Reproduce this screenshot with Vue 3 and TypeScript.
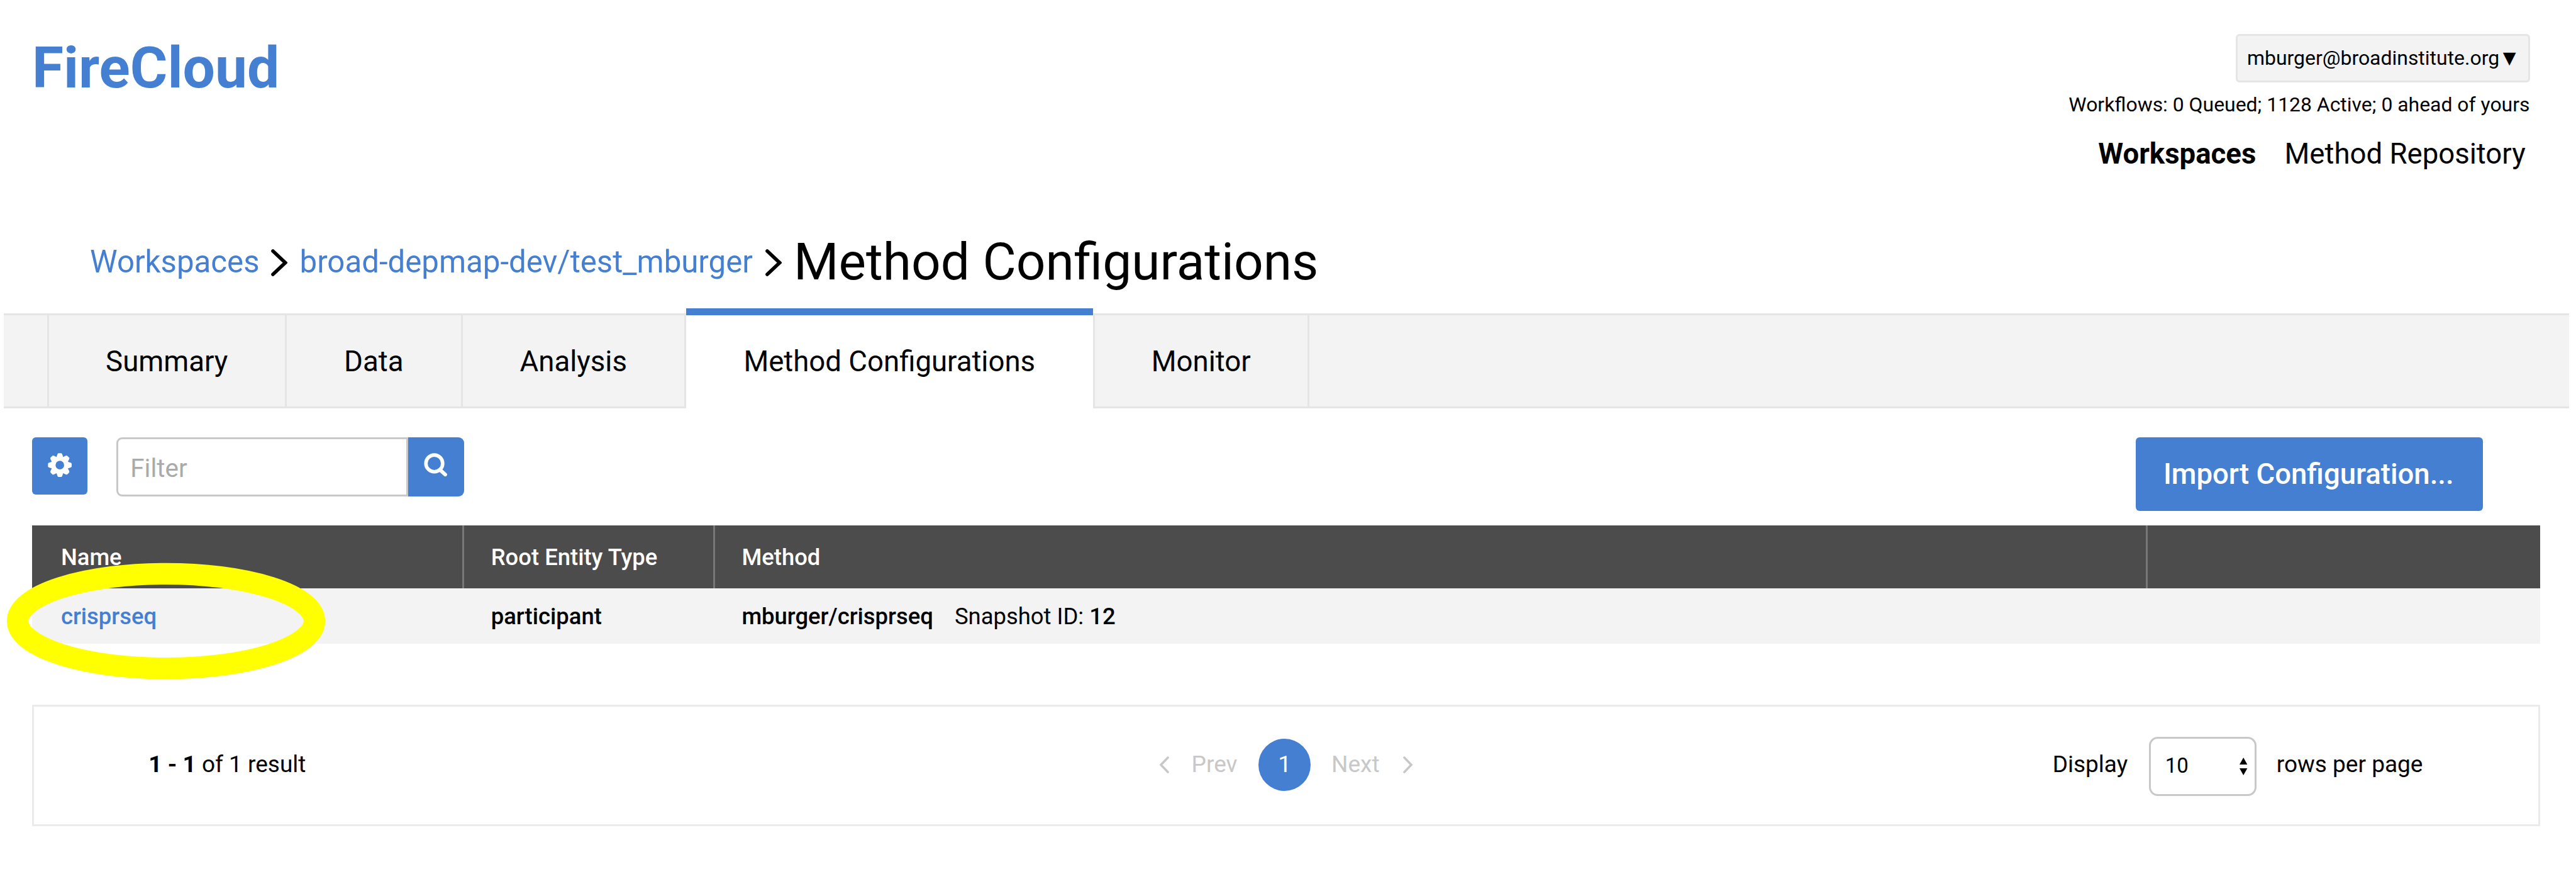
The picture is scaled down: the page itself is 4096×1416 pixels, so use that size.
<script setup lang="ts">
import { ref } from 'vue'

interface Tab {
  label: string
  width: number
}

interface MethodConfig {
  name: string
  rootEntityType: string
  method: string
  snapshotId: number
}

const user = 'mburger@broadinstitute.org'
const activeTab = ref('Method Configurations')
const filter = ref('')

const tabs: Tab[] = [
  { label: 'Summary', width: 381.5 },
  { label: 'Data', width: 279.5 },
  { label: 'Analysis', width: 355.5 },
  { label: 'Method Configurations', width: 646.5 },
  { label: 'Monitor', width: 344.5 },
]

const columns = ['Name', 'Root Entity Type', 'Method', '']

const configs: MethodConfig[] = [
  { name: 'crisprseq', rootEntityType: 'participant', method: 'mburger/crisprseq', snapshotId: 12 },
]

const teeth = [0, 45, 90, 135, 180, 225, 270, 315]
</script>

<template>
  <div class="page">
    <header class="header">
      <div class="logo">FireCloud</div>
      <div class="account">
        <div class="user-menu">
          <span>{{ user }}</span>
          <span class="caret">▼</span>
        </div>
        <div class="queue">Workflows: 0 Queued; 1128 Active; 0 ahead of yours</div>
        <nav class="main-nav">
          <a class="current">Workspaces</a>
          <a>Method Repository</a>
        </nav>
      </div>
    </header>

    <div class="breadcrumbs">
      <a class="crumb">Workspaces</a>
      <svg class="sep sep-first" viewBox="0 0 26 43"><path d="M3 3 L22.6 21.5 L3 40" /></svg>
      <a class="crumb">broad-depmap-dev/test_mburger</a>
      <svg class="sep sep-last" viewBox="0 0 26 43"><path d="M3 3 L22.6 21.5 L3 40" /></svg>
      <h1 class="title">Method Configurations</h1>
    </div>

    <nav class="tabs">
      <a
        v-for="tab in tabs"
        :key="tab.label"
        class="tab"
        :class="{ active: tab.label === activeTab }"
        :style="{ width: tab.width + 'px' }"
      ><span>{{ tab.label }}</span></a>
    </nav>

    <main class="content">
      <div class="toolbar">
        <button class="gear-button">
          <svg class="icon" viewBox="-28 -28 56 56">
            <circle r="15.2" fill="none" stroke="#fff" stroke-width="10.4" />
            <path
              v-for="angle in teeth"
              :key="angle"
              :transform="`rotate(${angle})`"
              fill="#fff"
              d="M-8 -18 L-5.6 -25 Q-4.8 -27.3 -3 -27.5 L3 -27.5 Q4.8 -27.3 5.6 -25 L8 -18 Z"
            />
          </svg>
        </button>
        <div class="filter">
          <input v-model="filter" class="filter-input" placeholder="Filter" />
          <button class="search-button">
            <svg class="icon" viewBox="0 0 56 56">
              <circle cx="24.2" cy="24" r="19.5" fill="none" stroke="#fff" stroke-width="8.2" />
              <path d="M38 39.5 L49.6 50" stroke="#fff" stroke-width="8.6" stroke-linecap="round" />
            </svg>
          </button>
        </div>
        <button class="import-button">Import Configuration...</button>
      </div>

      <div class="table">
        <div class="row head">
          <div v-for="(column, i) in columns" :key="i" class="cell">{{ column }}</div>
        </div>
        <div v-for="config in configs" :key="config.name" class="row body">
          <div class="cell"><a class="link">{{ config.name }}</a></div>
          <div class="cell">{{ config.rootEntityType }}</div>
          <div class="cell">
            <span>{{ config.method }}</span>
            <span class="snapshot">Snapshot ID: <b>{{ config.snapshotId }}</b></span>
          </div>
          <div class="cell"></div>
        </div>
        <svg class="highlight" viewBox="0 0 510 190">
          <ellipse cx="255" cy="95" rx="236" ry="75.2" />
        </svg>
      </div>

      <div class="pager">
        <div class="count"><b>1 - 1</b> of 1 result</div>
        <div class="pages">
          <svg class="arrow" viewBox="0 0 16 27"><path d="M14 2 L3 13.5 L14 25" /></svg>
          <span class="prev">Prev</span>
          <span class="page-number">1</span>
          <span class="next">Next</span>
          <svg class="arrow" viewBox="0 0 16 27"><path d="M2 2 L13 13.5 L2 25" /></svg>
        </div>
        <div class="page-size">
          <span>Display</span>
          <div class="select">
            <span>10</span>
            <svg class="updown" viewBox="0 0 12.4 28"><path d="M6.2 0 L12.4 11 H0 Z M0 17 H12.4 L6.2 28 Z" /></svg>
          </div>
          <span>rows per page</span>
        </div>
      </div>
    </main>
  </div>
</template>

<style>
body {
  margin: 0;
  background: #fff;
}
</style>

<style scoped>
.page {
  width: 4096px;
  height: 1416px;
  overflow: hidden;
  box-sizing: border-box;
  font-family: Roboto, sans-serif;
  font-size: 45.57px;
  color: #000;
  background: #fff;
}
.page * {
  box-sizing: border-box;
}
button,
input {
  font-family: inherit;
  margin: 0;
  padding: 0;
  border: 0;
  outline: 0;
}
.header {
  height: 366px;
  display: flex;
  justify-content: space-between;
  align-items: flex-start;
  padding: 54px 73.5px 0 51px;
}
.logo {
  margin-top: 1.3px;
  font-size: 91.1px;
  line-height: 106px;
  font-weight: 700;
  color: #457fd2;
}
.account {
  display: flex;
  flex-direction: column;
  align-items: flex-end;
}
.user-menu {
  width: 468px;
  height: 77px;
  display: flex;
  align-items: center;
  padding: 0 0 2px 15.5px;
  border: 3px solid #e5e5e5;
  border-radius: 6px;
  background: #f3f3f3;
  font-size: 31.95px;
  white-space: nowrap;
}
.caret {
  margin-left: 5.5px;
  font-family: 'DejaVu Sans', sans-serif;
  font-size: 27px;
  line-height: 30px;
}
.queue {
  margin-top: 14.7px;
  font-size: 31.92px;
  line-height: 40px;
}
.main-nav {
  margin-top: 32px;
  padding-right: 6.8px;
  display: flex;
  gap: 45.2px;
  line-height: 54px;
}
.current {
  font-weight: 700;
}
.breadcrumbs {
  height: 100px;
  display: flex;
  align-items: center;
  padding-left: 143px;
  font-size: 49.2px;
}
.crumb {
  color: #457fd2;
}
.sep {
  width: 26px;
  height: 43px;
  margin-top: 3px;
  fill: none;
  stroke: #000;
  stroke-width: 5.6;
  stroke-linecap: round;
}
.sep-first {
  margin-left: 18px;
  margin-right: 20px;
}
.sep-last {
  margin-left: 20.5px;
  margin-right: 18.5px;
}
.title {
  margin: 0;
  font-size: 82px;
  font-weight: 400;
  line-height: 96px;
}
.tabs {
  height: 151px;
  margin: 32px 11.5px 0 5.5px;
  padding-left: 69px;
  display: flex;
  border-top: 3px solid #e5e5e5;
  border-bottom: 3px solid #e5e5e5;
  background: #f3f3f3;
}
.tab {
  flex: none;
  display: flex;
  align-items: center;
  justify-content: center;
  border-right: 3px solid #e5e5e5;
  padding-top: 1px;
}
.tab:first-child,
.tab.active + .tab {
  border-left: 3px solid #e5e5e5;
}
.tab.active {
  margin: -11px 0 -3px;
  border-top: 11px solid #457fd2;
  border-right: 0;
  padding-bottom: 3px;
  background: #fff;
}
.content {
  margin: 46px 57px 0 51.3px;
}
.toolbar {
  height: 139.5px;
  display: flex;
  align-items: flex-start;
  padding-right: 91px;
}
.gear-button {
  width: 88px;
  height: 91px;
  padding-bottom: 3px;
  display: flex;
  align-items: center;
  justify-content: center;
  border-radius: 6px;
  background: #457fd2;
}
.icon {
  width: 38.3px;
  height: 38.3px;
  overflow: visible;
}
.filter {
  margin-left: 46px;
  display: flex;
  height: 94px;
}
.filter-input {
  width: 464px;
  padding: 4px 0 0 19px;
  border: 3px solid #c8c8c8;
  border-radius: 9px 0 0 9px;
  background: #fff;
  font-size: 40.4px;
  color: #000;
}
.filter-input::placeholder {
  color: #aaa;
  opacity: 1;
}
.search-button {
  width: 88.5px;
  padding: 0 0 5px;
  display: flex;
  align-items: center;
  justify-content: center;
  border-radius: 0 9px 9px 0;
  background: #457fd2;
}
.import-button {
  width: 552.5px;
  height: 116.5px;
  margin-left: auto;
  padding-right: 2px;
  border-radius: 6px;
  background: #457fd2;
  color: #fff;
  font-size: 45.5px;
  font-weight: 500;
}
.table {
  position: relative;
  font-size: 36.45px;
  font-weight: 500;
}
.row {
  display: grid;
  grid-template-columns: 683.8px 398.7px 2278.5px 1fr;
}
.head {
  height: 100px;
  background: #4c4c4c;
  color: #fff;
}
.body {
  height: 88px;
  background: #f3f3f3;
}
.cell {
  display: flex;
  align-items: center;
  padding-top: 1px;
  padding-left: 45.6px;
  white-space: pre;
}
.head .cell + .cell {
  padding-left: 42.6px;
  border-left: 3px solid #777;
}
.link {
  color: #457fd2;
}
.snapshot {
  margin-left: 34px;
  font-weight: 400;
}
.snapshot b {
  font-weight: 500;
}
/* Marker ring lying over the first configuration */
.highlight {
  position: absolute;
  left: -42.4px;
  top: 57px;
  width: 510px;
  height: 190px;
  fill: none;
  stroke: #ff0;
  stroke-width: 34.2;
}
.pager {
  height: 193.5px;
  margin-top: 97px;
  padding: 0 183.5px 0 182px;
  display: grid;
  grid-template-columns: 1606.3px 1fr auto;
  align-items: center;
  border: 3px solid #ebebeb;
  font-size: 37px;
  line-height: 44px;
}
.count {
  margin-top: -2px;
}
.pages {
  display: flex;
  align-items: center;
  color: #c8c8c8;
  margin-top: -2px;
}
.arrow {
  width: 16px;
  height: 27px;
  fill: none;
  stroke: #c8c8c8;
  stroke-width: 3.6;
  stroke-linecap: round;
}
.prev {
  margin-left: 36px;
  width: 72.5px;
}
.page-number {
  width: 83px;
  height: 83px;
  margin: 0 33px 0 34px;
  display: flex;
  align-items: center;
  justify-content: center;
  border-radius: 50%;
  background: #457fd2;
  color: #fff;
}
.next {
  margin-right: 37px;
  width: 76.5px;
}
.page-size {
  display: flex;
  align-items: center;
}
.page-size > span {
  margin-top: -2px;
}
.select {
  width: 171px;
  height: 94px;
  margin: 3px 31.5px 0 34px;
  padding: 0 11.5px 0 22.5px;
  display: flex;
  align-items: center;
  justify-content: space-between;
  border: 3px solid #c8c8c8;
  border-radius: 14px;
  font-size: 33px;
}
.select span {
  margin-top: -2px;
}
.updown {
  width: 12.4px;
  height: 28px;
}
</style>
